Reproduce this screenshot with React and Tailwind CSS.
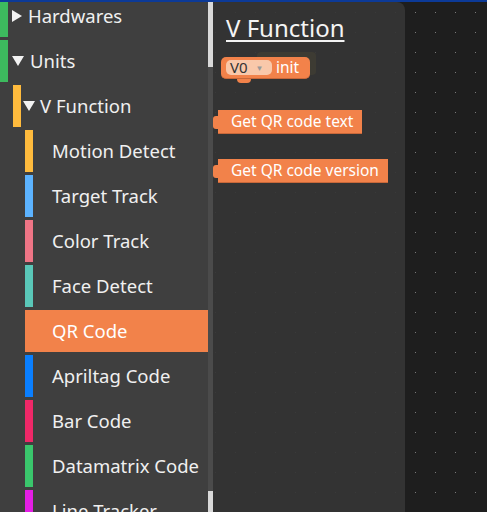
import React from 'react';

const items = [
  { label: 'Hardwares', level: 0, color: '#3dba5e', arrow: 'right' },
  { label: 'Units', level: 0, color: '#3dba5e', arrow: 'down' },
  { label: 'V Function', level: 1, color: '#ffbb3d', arrow: 'down' },
  { label: 'Motion Detect', level: 2, color: '#ffbb3d' },
  { label: 'Target Track', level: 2, color: '#5cb3ff' },
  { label: 'Color Track', level: 2, color: '#ef7586' },
  { label: 'Face Detect', level: 2, color: '#5ac7b8' },
  { label: 'QR Code', level: 2, color: '#f2824a', selected: true },
  { label: 'Apriltag Code', level: 2, color: '#0a7fff' },
  { label: 'Bar Code', level: 2, color: '#ef2868' },
  { label: 'Datamatrix Code', level: 2, color: '#3ac66c' },
  { label: 'Line Tracker', level: 2, color: '#e41ee5' },
];

const font = { fontFamily: '"Noto Sans", "Open Sans", sans-serif' };

function Arrow({ dir }) {
  if (dir === 'right') {
    return (
      <svg width="10" height="12" viewBox="0 0 10 12" className="shrink-0">
        <polygon points="0,0 10,6 0,12" fill="#f2f2f2" />
      </svg>
    );
  }
  return (
    <svg width="12" height="10" viewBox="0 0 12 10" className="shrink-0">
      <polygon points="0,0 12,0 6,10" fill="#f2f2f2" />
    </svg>
  );
}

function Row({ item }) {
  const bar = <div className="w-[8px] h-full shrink-0" style={{ background: item.color }} />;
  if (item.level === 0) {
    return (
      <div className="flex h-[42px] mb-[3px] items-center">
        {bar}
        <div className="ml-[4px]"><Arrow dir={item.arrow} /></div>
        <span className="ml-[6px] text-[18.5px] text-[#f0f0f0]">{item.label}</span>
      </div>
    );
  }
  if (item.level === 1) {
    return (
      <div className="flex h-[42px] mb-[3px] items-center pl-[13px]">
        {bar}
        <div className="ml-[2px]"><Arrow dir={item.arrow} /></div>
        <span className="ml-[5px] text-[18.5px] text-[#f0f0f0]">{item.label}</span>
      </div>
    );
  }
  if (item.selected) {
    return (
      <div className="flex h-[42px] mb-[3px] items-center ml-[25px] bg-[#f2824a]">
        <span className="ml-[27px] text-[18.5px] text-white">{item.label}</span>
      </div>
    );
  }
  return (
    <div className="flex h-[42px] mb-[3px] items-center pl-[25px]">
      {bar}
      <span className="ml-[19px] text-[18.5px] text-[#f0f0f0]">{item.label}</span>
    </div>
  );
}

function OutputBlock({ text }) {
  return (
    <div className="flex items-center">
      <div className="w-[5px] h-[13px] bg-[#f2824a] rounded-l-[3px]" />
      <div className="h-[24px] flex items-center pl-[13px] pr-[9px] bg-[#f2824a] border-b border-[#c8683a] text-white text-[15.5px] leading-none">
        {text}
      </div>
    </div>
  );
}

export default function App() {
  return (
    <div className="w-[487px] h-[512px] overflow-hidden bg-[#1e1e1e] flex flex-col" style={font}>
      <div className="h-[2px] bg-[#0c3a98] shrink-0" />
      <div className="flex flex-1 min-h-0">
        <div className="w-[208px] bg-[#3f3f3f] overflow-hidden shrink-0">
          <div className="mt-[-7px]">
            {items.map((it) => (
              <Row key={it.label} item={it} />
            ))}
          </div>
        </div>
        <div className="w-[5px] bg-[#4b4b4b] flex flex-col justify-between shrink-0">
          <div className="h-[65px] bg-[#d9d9d9]" />
          <div className="h-[21px] bg-[#d9d9d9]" />
        </div>
        <div className="relative flex-1">
          <svg className="absolute inset-0" width="100%" height="100%">
            <defs>
              <pattern id="dots" x="2" y="10" width="20" height="20" patternUnits="userSpaceOnUse">
                <rect x="0" y="0" width="1" height="1" fill="#7a7a7a" />
              </pattern>
            </defs>
            <rect width="100%" height="100%" fill="url(#dots)" />
          </svg>
          <div className="absolute left-0 top-0 bottom-0 w-[192px] bg-[rgba(53,53,53,0.93)] rounded-tr-[8px]">
            <div className="pl-[13px] pt-[11px] text-[24px] leading-[30px] text-[#f4f4f4] underline underline-offset-[3px] decoration-[1.5px]">
              V Function
            </div>
            <div className="relative mt-[9px] h-[30px]">
              <div className="absolute left-[44px] top-[0px] w-[59px] h-[23px] bg-[#3d3b33] rounded-[4px]" />
              <div className="absolute left-[8px] top-[5px]">
                <div className="h-[22px] w-[89px] bg-[#f2824a] rounded-[5px] border-b border-[#c8683a] flex items-center pl-[5px]">
                  <div className="h-[15px] w-[46px] rounded-[5px] bg-[#f9c8aa] flex items-center pl-[4px] text-[15px] text-[#333] leading-none">
                    V0
                    <span className="ml-[8px] text-[8px] text-[#999]">▼</span>
                  </div>
                  <span className="ml-[4px] text-[15.5px] text-white leading-none">init</span>
                </div>
                <div className="ml-[16px] w-[14px] h-[4px] bg-[#f2824a] rounded-b-[4px]" />
              </div>
            </div>
            <div className="mt-[28px]">
              <OutputBlock text="Get QR code text" />
            </div>
            <div className="mt-[25px]">
              <OutputBlock text="Get QR code version" />
            </div>
          </div>
        </div>
      </div>
    </div>
  );
}
